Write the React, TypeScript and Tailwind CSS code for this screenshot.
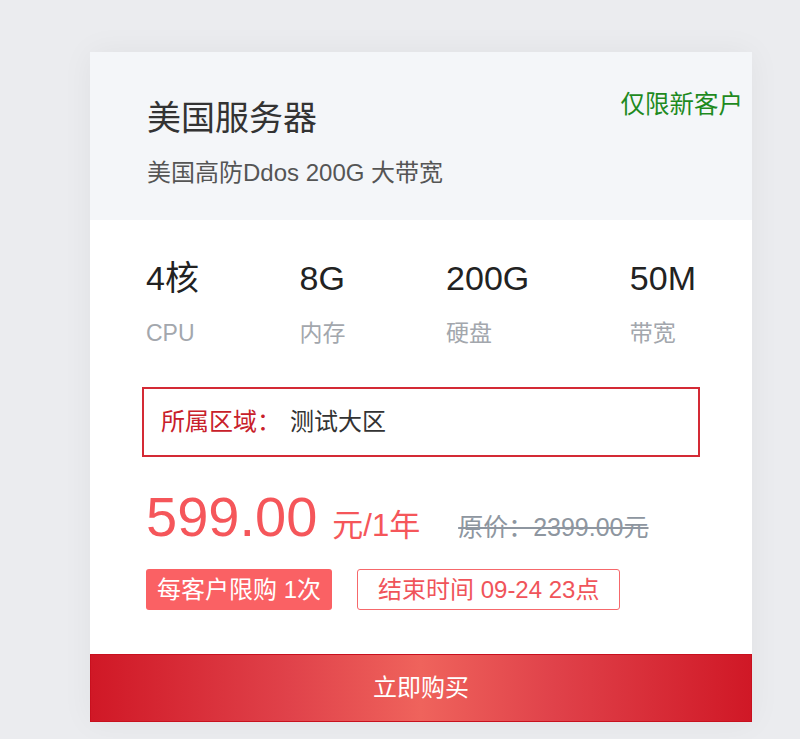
import React from "react";

const specs = [
  { v: "4核", l: "CPU" },
  { v: "8G", l: "内存" },
  { v: "200G", l: "硬盘" },
  { v: "50M", l: "带宽" },
];

export default function App() {
  return (
    <div
      className="w-[800px] h-[739px] bg-[#ebecef] pt-[52px] pl-[90px] overflow-hidden"
      style={{ fontFamily: '"Liberation Sans", "Noto Sans CJK SC", sans-serif' }}
    >
      <div className="w-[662px] bg-white shadow-[0_0_30px_rgba(0,0,0,0.05)]">
        {/* header */}
        <div className="h-[168px] bg-[#f4f6f9] pl-[57px] pr-[9px] pt-[41px] flex justify-between items-start">
          <div className="mt-[8px]">
            <div className="text-[34px] leading-[34px] text-[#333]">美国服务器</div>
            <div className="mt-[26px] text-[24px] leading-[24px] text-[#555]">美国高防Ddos 200G 大带宽</div>
          </div>
          <div className="text-[24.5px] leading-[24px] text-[#1e8a1e]">仅限新客户</div>
        </div>

        {/* body */}
        <div className="px-[56px] pt-[41px]">
          <div className="flex justify-between">
            {specs.map((s) => (
              <div key={s.l} className="flex flex-col">
                <div className="text-[34px] leading-[34px] text-[#222]">{s.v}</div>
                <div className="mt-[27px] text-[23px] leading-[23px] text-[#a3a7ad]">{s.l}</div>
              </div>
            ))}
          </div>

          <div className="mt-[42px] -mx-[4px] h-[70px] border-2 border-[#d42a35] flex items-center pl-[17px] text-[24px] leading-[24px]">
            <span className="text-[#c8202a]">所属区域：</span>
            <span className="ml-[9px] text-[#333]">测试大区</span>
          </div>

          <div className="mt-[32px] flex items-baseline">
            <span className="text-[56px] leading-[56px] text-[#f5565a]">599.00</span>
            <span className="ml-[15px] text-[31px] leading-[31px] text-[#f5565a]">元/1年</span>
            <span className="ml-[38px] text-[25px] leading-[25px] text-[#8e96a0] line-through">原价：2399.00元</span>
          </div>

          <div className="mt-[24px] flex gap-[25px]">
            <div className="h-[41px] px-[11px] rounded-[3px] bg-[#fa6164] text-white text-[24px] leading-[41px]">
              每客户限购 1次
            </div>
            <div className="h-[41px] px-[20px] rounded-[3px] border border-[#f6686b] text-[#f0545a] text-[24px] leading-[39px]">
              结束时间 09-24 23点
            </div>
          </div>
        </div>

        <div className="mt-[44px] h-[68px] flex items-center justify-center text-white text-[24px] bg-[linear-gradient(90deg,#d01826_0%,#e0424a_30%,#ef635c_50%,#e0424a_70%,#d01826_100%)] border border-[#c8101e]">
          立即购买
        </div>
      </div>
    </div>
  );
}
